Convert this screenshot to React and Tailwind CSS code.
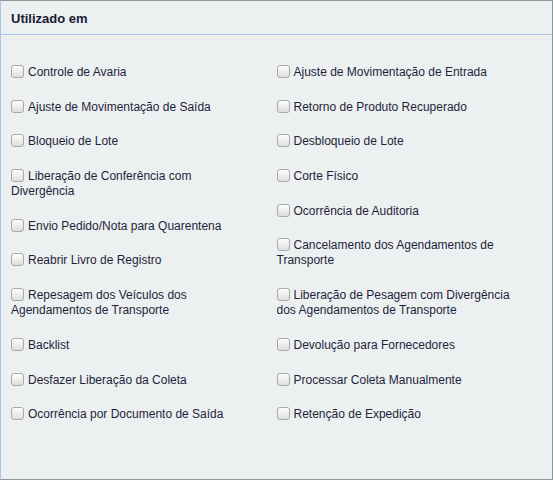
const left = [
  "Controle de Avaria",
  "Ajuste de Movimentação de Saída",
  "Bloqueio de Lote",
  "Liberação de Conferência com Divergência",
  "Envio Pedido/Nota para Quarentena",
  "Reabrir Livro de Registro",
  "Repesagem dos Veículos dos Agendamentos de Transporte",
  "Backlist",
  "Desfazer Liberação da Coleta",
  "Ocorrência por Documento de Saída",
];

const right = [
  "Ajuste de Movimentação de Entrada",
  "Retorno de Produto Recuperado",
  "Desbloqueio de Lote",
  "Corte Físico",
  "Ocorrência de Auditoria",
  "Cancelamento dos Agendamentos de Transporte",
  "Liberação de Pesagem com Divergência dos Agendamentos de Transporte",
  "Devolução para Fornecedores",
  "Processar Coleta Manualmente",
  "Retenção de Expedição",
];

function Item({ label }) {
  return (
    <label className="block leading-[15px] mb-[19.7px] pr-[25px]">
      <span className="inline-block w-[13px] h-[13px] mr-[4px] align-[-2px] rounded-[3px] border border-[#a9a9a9] bg-gradient-to-b from-[#fdfdfd] to-[#dedede]"></span>
      {label}
    </label>
  );
}

export default function App() {
  return (
    <div className="w-[553px] h-[480px] bg-[#ecf0f1] border-t border-r border-b border-[#8b9899] border-l border-l-[#a9c4ea] font-['Liberation_Sans',Arial,sans-serif] text-[12px] text-[#1f1f3a]">
      {/* Cabeçalho */}
      <div className="h-[34px] flex items-center px-[10px] pt-[2px] border-b border-[#a9c4ea] font-bold text-[13px] text-[#1a1a33]">
        Utilizado em
      </div>

      {/* Lista de opções */}
      <div className="grid grid-cols-2 px-[10px] pt-[30px]">
        <div>
          {left.map((l) => (
            <Item key={l} label={l} />
          ))}
        </div>
        <div>
          {right.map((l) => (
            <Item key={l} label={l} />
          ))}
        </div>
      </div>
    </div>
  );
}
